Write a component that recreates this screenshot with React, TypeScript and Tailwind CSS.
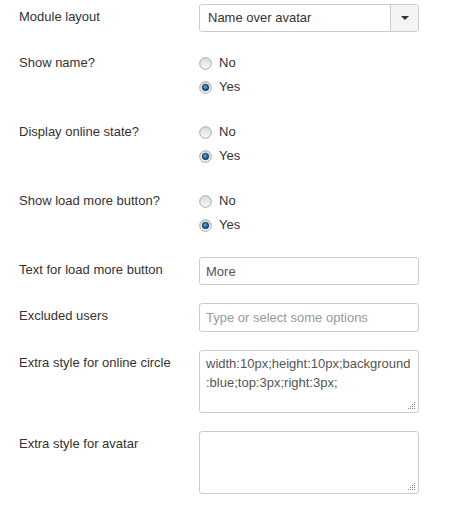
import React from 'react';

const font = { fontFamily: '"Liberation Sans", Arial, sans-serif' };

const Radio = ({ checked }: { checked?: boolean }) => (
  <svg width="13" height="13" viewBox="0 0 13 13" className="shrink-0">
    <defs>
      <linearGradient id={checked ? 'rbg-c' : 'rbg'} x1="0" y1="0" x2="0" y2="1">
        <stop offset="0" stopColor="#d9d9d9" />
        <stop offset="1" stopColor="#fafafa" />
      </linearGradient>
      <radialGradient id="dot" cx="0.45" cy="0.4" r="0.6">
        <stop offset="0" stopColor="#5fb0e6" />
        <stop offset="0.6" stopColor="#1b6aa5" />
        <stop offset="1" stopColor="#0d3f66" />
      </radialGradient>
    </defs>
    <circle cx="6.5" cy="6.5" r="5.8" fill={`url(#${checked ? 'rbg-c' : 'rbg'})`} stroke="#a6a6a6" strokeWidth="1" />
    {checked && <circle cx="6.5" cy="6.5" r="3.2" fill="url(#dot)" stroke="#1f2f3d" strokeWidth="0.8" />}
  </svg>
);

const Grip = () => (
  <svg width="7" height="7" viewBox="0 0 7 7" className="absolute right-[4px] bottom-[4px]">
    {[
      [6, 0], [4, 2], [6, 2], [2, 4], [4, 4], [6, 4], [0, 6], [2, 6], [4, 6], [6, 6],
    ].map(([x, y], i) => (
      <rect key={i} x={x} y={y} width="1" height="1" fill="#8a8a8a" />
    ))}
  </svg>
);

const Row = ({ label, children }: { label: string; children: React.ReactNode }) => (
  <div className="flex mb-[18px]">
    <div className="w-[180px] shrink-0 pt-[4px] leading-[18px] text-[#333]">{label}</div>
    <div className="w-[220px]">{children}</div>
  </div>
);

const RadioGroup = () => (
  <div className="flex flex-col gap-[6px] pt-[4px] pb-[5px]">
    <label className="flex items-center gap-[7px] h-[18px] leading-[18px] text-[#333]">
      <Radio />
      <span>No</span>
    </label>
    <label className="flex items-center gap-[7px] h-[18px] leading-[18px] text-[#333]">
      <Radio checked />
      <span>Yes</span>
    </label>
  </div>
);

export default function App() {
  return (
    <div className="w-[465px] h-[507px] bg-white pl-[19px] pt-[4px] text-[13px] overflow-hidden" style={font}>
      <Row label="Module layout">
        <div className="flex h-[28px] border border-[#ccc] rounded-[3px] overflow-hidden">
          <div className="flex-1 pl-[8px] leading-[26px] text-[#333]">Name over avatar</div>
          <div className="w-[28px] border-l border-[#ccc] bg-[#f4f4f4] flex items-center justify-center">
            <svg width="8" height="4" viewBox="0 0 8 4">
              <path d="M0 0 L8 0 L4 4 Z" fill="#333" />
            </svg>
          </div>
        </div>
      </Row>

      <Row label="Show name?">
        <RadioGroup />
      </Row>

      <Row label="Display online state?">
        <RadioGroup />
      </Row>

      <Row label="Show load more button?">
        <RadioGroup />
      </Row>

      <Row label="Text for load more button">
        <input
          readOnly
          value="More"
          className="w-full h-[28px] border border-[#ccc] rounded-[3px] px-[6px] text-[#555] outline-none"
          style={font}
        />
      </Row>

      <Row label="Excluded users">
        <input
          readOnly
          placeholder="Type or select some options"
          className="w-full h-[29px] border border-[#ccc] rounded-[3px] px-[6px] text-[#555] placeholder:text-[#999] outline-none"
          style={font}
        />
      </Row>

      <Row label="Extra style for online circle">
        <div className="relative">
          <textarea
            readOnly
            value="width:10px;height:10px;background:blue;top:3px;right:3px;"
            className="block w-full h-[63px] border border-[#ccc] rounded-[3px] px-[6px] pt-[3px] leading-[19px] text-[#555] resize-none outline-none overflow-hidden"
            style={font}
          />
          <Grip />
        </div>
      </Row>

      <Row label="Extra style for avatar">
        <div className="relative">
          <textarea
            readOnly
            className="block w-full h-[63px] border border-[#ccc] rounded-[3px] px-[6px] pt-[3px] leading-[19px] text-[#555] resize-none outline-none overflow-hidden"
            style={font}
          />
          <Grip />
        </div>
      </Row>
    </div>
  );
}
